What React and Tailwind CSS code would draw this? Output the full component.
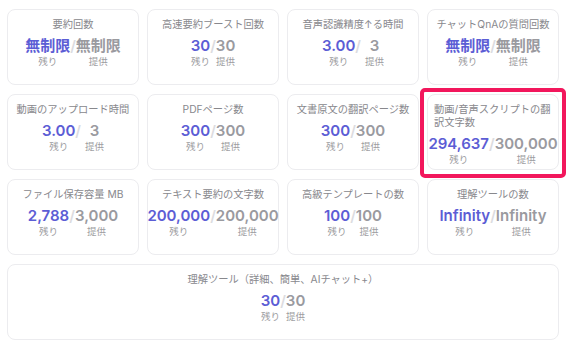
import React from "react";

const items = [
  { title: "要約回数", rem: "無制限", tot: "無制限" },
  { title: "高速要約ブースト回数", rem: "30", tot: "30" },
  { title: "音声認識精度↑る時間", rem: "3.00", tot: "3", space: true },
  { title: "チャットQnAの質問回数", rem: "無制限", tot: "無制限" },
  { title: "動画のアップロード時間", rem: "3.00", tot: "3", space: true },
  { title: "PDFページ数", rem: "300", tot: "300" },
  { title: "文書原文の翻訳ページ数", rem: "300", tot: "300" },
  { title: "動画/音声スクリプトの翻訳文字数", rem: "294,637", tot: "300,000", highlight: true },
  { title: "ファイル保存容量 MB", rem: "2,788", tot: "3,000" },
  { title: "テキスト要約の文字数", rem: "200,000", tot: "200,000" },
  { title: "高級テンプレートの数", rem: "100", tot: "100" },
  { title: "理解ツールの数", rem: "Infinity", tot: "Infinity" },
  { title: "理解ツール（詳細、簡単、AIチャット+）", rem: "30", tot: "30", wide: true },
];

function Card({ item }) {
  return (
    <div className="relative h-full">
      <div className="h-full rounded-[8px] border border-[#ececef] bg-white px-[6px] pt-[8px]">
        <div className="flex justify-center">
          <span className="text-[10.25px] leading-[13px] text-[#88888d]">{item.title}</span>
        </div>
        <div className="mt-[5px] flex items-start justify-center whitespace-nowrap">
          <div className="flex flex-col items-center">
            <span className="text-[15px] font-semibold leading-[20px] text-[#5c5dd5]">{item.rem}</span>
            <span className="mt-[1px] text-[9.5px] leading-[10px] text-[#9c9ca0]">残り</span>
          </div>
          <span className="text-[15px] font-semibold leading-[20px] text-[#dcdce0]">/</span>
          <div className={`flex flex-col items-center ${item.space ? "ml-[4px]" : ""}`}>
            <span className="text-[15px] font-semibold leading-[20px] text-[#9a9a9f]">{item.tot}</span>
            <span className="mt-[1px] text-[9.5px] leading-[10px] text-[#9c9ca0]">提供</span>
          </div>
        </div>
      </div>
      {item.highlight && (
        <div className="pointer-events-none absolute -left-[7px] -right-[7px] -top-[6px] -bottom-[8px] z-10 rounded-[5px] border-4 border-[#f2175c]" />
      )}
    </div>
  );
}

export default function App() {
  return (
    <div
      className="min-h-[348px] w-[570px] bg-white px-[7px] pt-[9px]"
      style={{ fontFamily: 'Inter, "Noto Sans CJK JP", sans-serif' }}
    >
      <div className="grid grid-cols-[repeat(4,132px)] auto-rows-[76px] gap-x-[8px] gap-y-[9px]">
        {items.map((it, i) => (
          <div key={i} className={it.wide ? "col-span-4" : ""}>
            <Card item={it} />
          </div>
        ))}
      </div>
    </div>
  );
}
